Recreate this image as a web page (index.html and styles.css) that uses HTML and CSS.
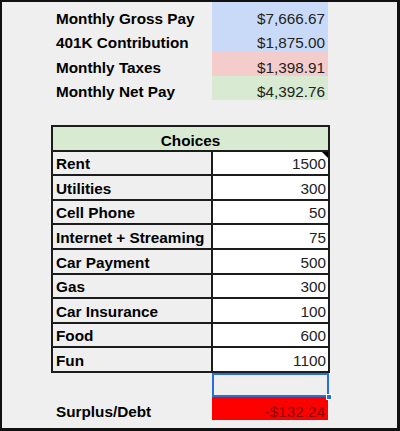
FILE: index.html
```html
<!DOCTYPE html>
<html>
<head>
<meta charset="utf-8">
<link rel="stylesheet" href="styles.css">
</head>
<body>
<div class="frame">
  <div class="sheet">
    <div class="summary">
      <div class="label">Monthly Gross Pay</div><div class="val blue">$7,666.67</div>
      <div class="label">401K Contribution</div><div class="val blue">$1,875.00</div>
      <div class="label">Monthly Taxes</div><div class="val red">$1,398.91</div>
      <div class="label">Monthly Net Pay</div><div class="val green">$4,392.76</div>
    </div>
    <div class="choices">
      <div class="head">Choices</div>
      <div class="clabel">Rent</div><div class="cval note">1500</div>
      <div class="clabel">Utilities</div><div class="cval">300</div>
      <div class="clabel">Cell Phone</div><div class="cval">50</div>
      <div class="clabel">Internet + Streaming</div><div class="cval">75</div>
      <div class="clabel">Car Payment</div><div class="cval">500</div>
      <div class="clabel">Gas</div><div class="cval">300</div>
      <div class="clabel">Car Insurance</div><div class="cval">100</div>
      <div class="clabel">Food</div><div class="cval">600</div>
      <div class="clabel">Fun</div><div class="cval">1100</div>
    </div>
    <div class="result">
      <div></div><div class="select"><span class="handle"></span></div>
      <div class="label">Surplus/Debt</div><div class="val debt">-$132.24</div>
    </div>
  </div>
</div>
</body>
</html>
```
FILE: styles.css
```css
html, body {
  margin: 0;
  padding: 0;
}
body {
  font-family: "Liberation Sans", Arial, sans-serif;
  font-size: 15.3px;
}
.frame {
  box-sizing: border-box;
  width: 400px;
  height: 431px;
  border-style: solid;
  border-color: #111;
  border-width: 2px 3px 3px 2px;
  background: #efefef;
  overflow: hidden;
}
.sheet {
  margin-left: 49px;
  width: 279px;
  display: flex;
  flex-direction: column;
}
.summary {
  display: grid;
  grid-template-columns: 161px 116px;
  grid-auto-rows: 24.5px;
}
.label {
  display: flex;
  align-items: flex-end;
  padding-left: 5px;
  font-weight: bold;
  color: #000;
  line-height: 17px;
}
.val {
  display: flex;
  align-items: flex-end;
  justify-content: flex-end;
  padding-right: 3px;
  color: #222;
  line-height: 17px;
}
.blue { background: #c9daf8; }
.red { background: #f4cccc; }
.green { background: #d9ead3; }
.choices {
  margin-top: 25px;
  display: grid;
  grid-template-columns: 158px 115px;
  grid-auto-rows: 22.6px;
  gap: 2px;
  padding: 2px;
  background: #1c1c1c;
}
.head {
  grid-column: 1 / 3;
  background: #d9ead3;
  font-weight: bold;
  text-align: center;
  display: flex;
  align-items: flex-end;
  justify-content: center;
  line-height: 17px;
  padding-bottom: 1px;
}
.clabel {
  background: #efefef;
  font-weight: bold;
  color: #000;
  display: flex;
  align-items: flex-end;
  padding-left: 3px;
  line-height: 17px;
  padding-bottom: 2px;
}
.cval {
  background: #fff;
  color: #222;
  display: flex;
  align-items: flex-end;
  justify-content: flex-end;
  padding-right: 2px;
  line-height: 17px;
  padding-bottom: 2px;
}
.note {
  position: relative;
}
.note::after {
  content: "";
  position: absolute;
  top: 0;
  right: 0;
  border-style: solid;
  border-width: 0 6px 6px 0;
  border-color: transparent #000 transparent transparent;
}
.result {
  display: grid;
  grid-template-columns: 161px 117px;
  grid-template-rows: 24px 23px;
}
.result .val {
  margin-right: 1px;
}
.select {
  position: relative;
  box-sizing: border-box;
  border: 2px solid #2b6fd6;
}
.handle {
  position: absolute;
  right: -5px;
  bottom: -5px;
  width: 6px;
  height: 6px;
  background: #2b6fd6;
  border: 1px solid #fff;
  box-sizing: border-box;
}
.debt {
  background: #ff0000;
  color: #8e0000;
}
```
